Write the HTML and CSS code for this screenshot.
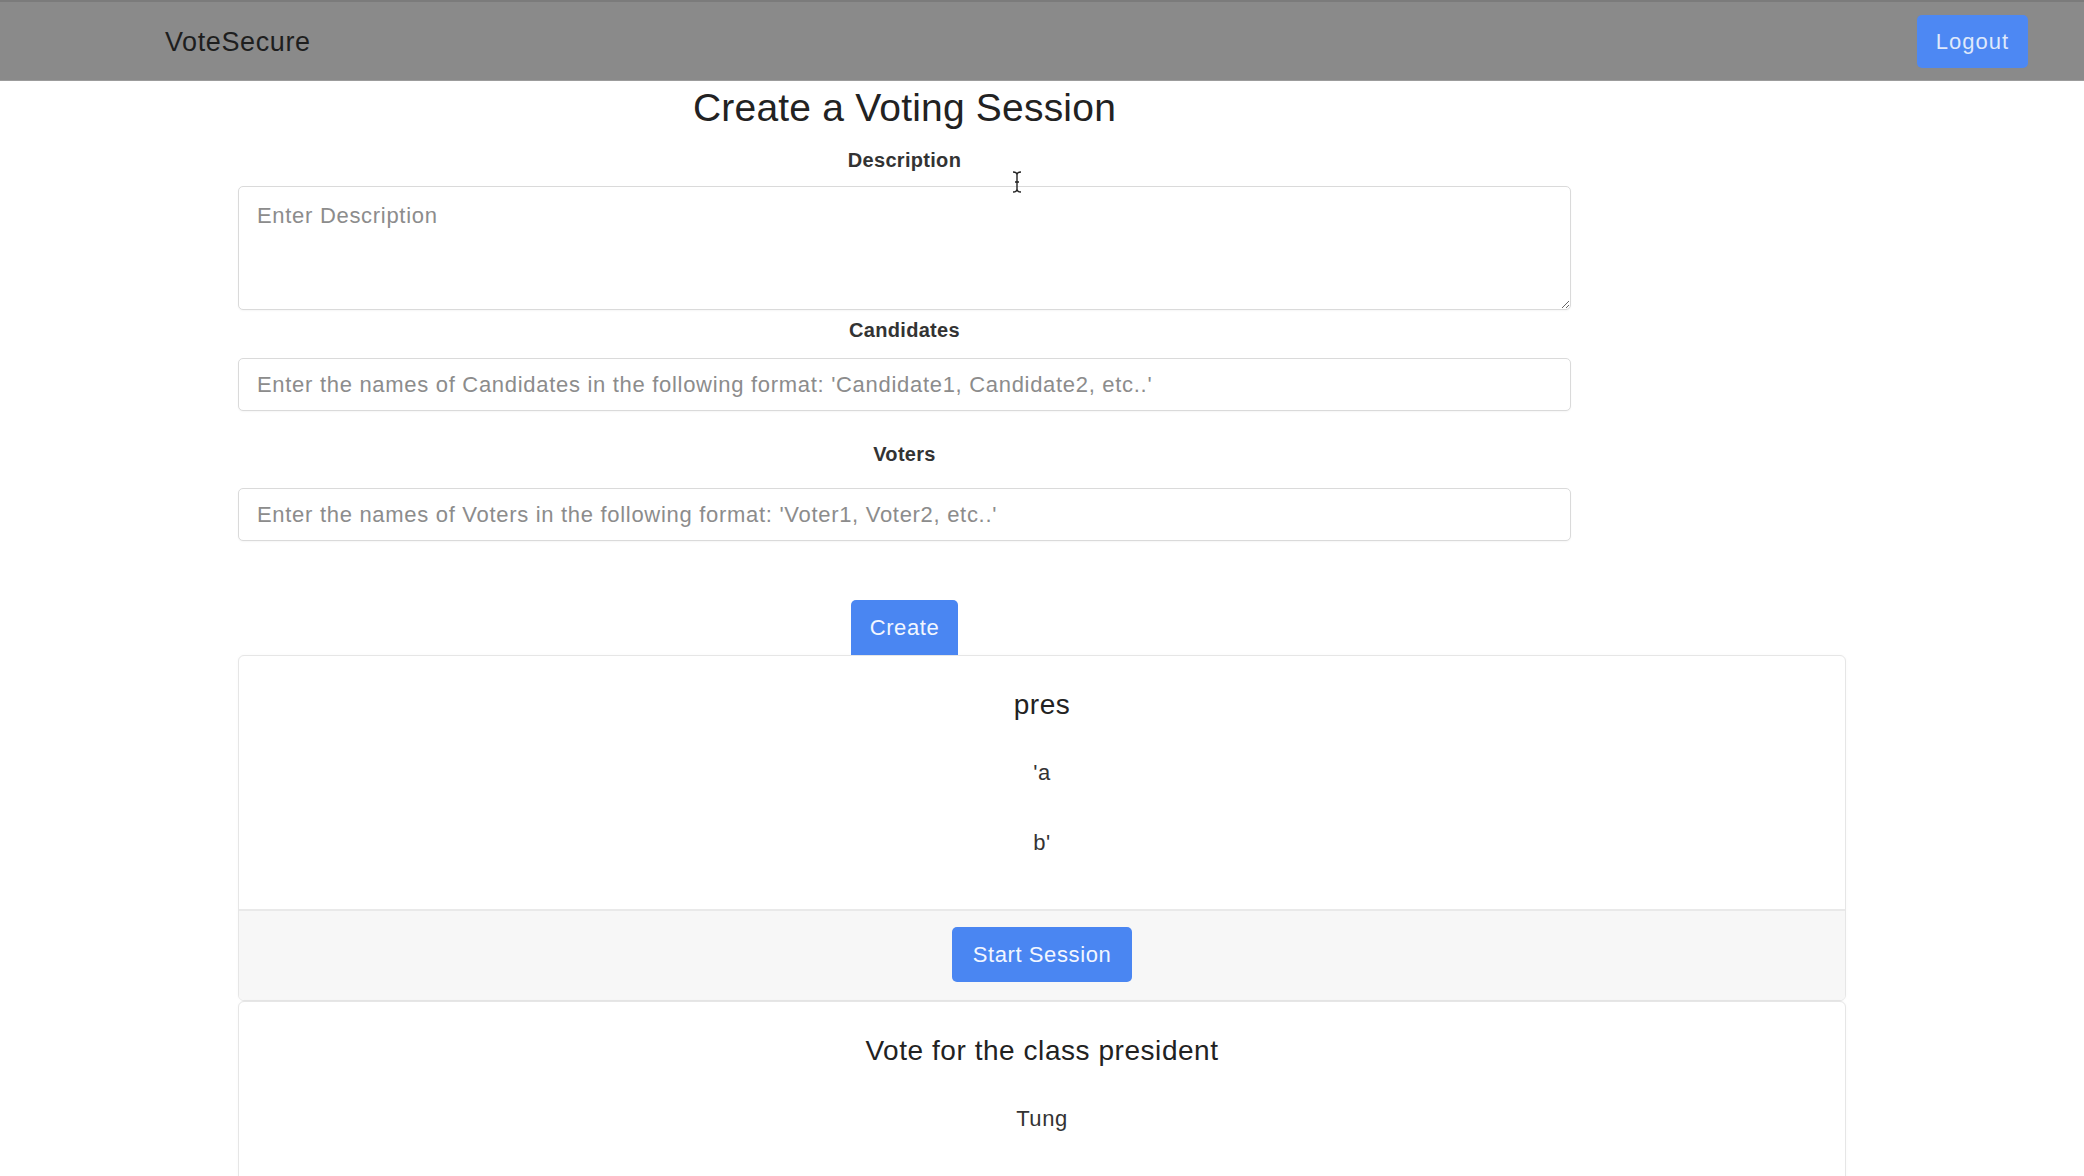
FILE: index.html
```html
<!DOCTYPE html>
<html lang="en">
<head>
<meta charset="utf-8">
<title>VoteSecure</title>
<link rel="stylesheet" href="styles.css">
</head>
<body>
<nav class="navbar">
  <span class="brand">VoteSecure</span>
  <button class="btn btn-logout">Logout</button>
</nav>
<main class="container">
  <form class="create-form">
    <h3 class="form-title">Create a Voting Session</h3>
    <label class="form-label label-desc">Description</label>
    <textarea class="form-control textarea" placeholder="Enter Description"></textarea>
    <label class="form-label label-cand">Candidates</label>
    <input class="form-control" type="text" placeholder="Enter the names of Candidates in the following format: 'Candidate1, Candidate2, etc..'">
    <label class="form-label label-voters">Voters</label>
    <input class="form-control" type="text" placeholder="Enter the names of Voters in the following format: 'Voter1, Voter2, etc..'">
    <div class="create-row">
      <button type="button" class="btn btn-create">Create</button>
    </div>
  </form>

  <section class="card">
    <div class="card-body">
      <h5 class="card-title">pres</h5>
      <div class="candidates">
        <p class="candidate">'a</p>
        <p class="candidate">b'</p>
      </div>
    </div>
    <div class="card-footer">
      <button class="btn btn-start">Start Session</button>
    </div>
  </section>

  <section class="card">
    <div class="card-body">
      <h5 class="card-title">Vote for the class president</h5>
      <div class="candidates">
        <p class="candidate">Tung</p>
      </div>
    </div>
  </section>
</main>
<svg class="cursor" width="10" height="22" viewBox="0 0 10 22" aria-hidden="true">
  <path d="M1 1 Q5 1 5 4 Q5 1 9 1 M5 4 V18 M1 21 Q5 21 5 18 Q5 21 9 21 M3 11 H7" fill="none" stroke="#222" stroke-width="1.4"/>
</svg>
</body>
</html>
```

FILE: styles.css
```css
* { box-sizing: border-box; }

html, body {
  margin: 0;
  padding: 0;
  background: #ffffff;
  font-family: "Liberation Sans", Arial, Helvetica, sans-serif;
  color: #222;
}

.navbar {
  height: 81px;
  background: #8a8a8a;
  border-top: 2px solid #7b7b7b;
  border-bottom: 1px solid #9c9c9c;
  display: flex;
  align-items: center;
  justify-content: space-between;
  padding: 0 56px 0 165px;
}

.brand {
  font-size: 27px;
  color: #1e1e1e;
  letter-spacing: 0.6px;
  margin-top: 2px;
}

.btn {
  font-family: inherit;
  font-size: 22px;
  line-height: 33px;
  border: none;
  border-radius: 5px;
  background: #4a86f2;
  color: #f2f6ff;
  cursor: pointer;
  letter-spacing: 0.6px;
}

.btn-logout {
  background: #4d88f3;
  color: #dfe9fb;
  padding: 10px 19px;
  letter-spacing: 1px;
}

.container {
  width: 1608px;
  margin: 0 auto;
}

.create-form {
  width: 1333px;
  display: flex;
  flex-direction: column;
  align-items: center;
}

.form-title {
  margin: 3px 0 13px;
  font-size: 39px;
  line-height: 48px;
  font-weight: 500;
  color: #222;
  letter-spacing: 0.2px;
}

.form-label {
  font-size: 20px;
  line-height: 30px;
  font-weight: 700;
  color: #333;
  letter-spacing: 0.3px;
}

.label-desc { margin-bottom: 11px; }
.label-cand { margin-top: 5px; margin-bottom: 13px; }
.label-voters { margin-top: 28px; margin-bottom: 19px; }

.form-control {
  width: 100%;
  font-family: inherit;
  font-size: 22px;
  letter-spacing: 0.7px;
  color: #333;
  border: 1px solid #dadada;
  border-radius: 5px;
  background: #fff;
  padding: 9px 18px;
  height: 53px;
  box-shadow: 0 1px 2px rgba(0, 0, 0, 0.04);
  outline: none;
}

.form-control::placeholder {
  color: #8c8c8c;
}

.textarea {
  height: 124px;
  padding: 12px 18px;
  resize: vertical;
  line-height: 1.5;
}

.create-row {
  margin-top: 59px;
  display: flex;
  justify-content: center;
}

.btn-create {
  padding: 11px 19px;
  border-radius: 5px 5px 0 0;
}

.card {
  border: 1px solid #e6e6e6;
  border-radius: 6px;
  background: #fff;
  box-shadow: 0 0 3px rgba(0, 0, 0, 0.03);
  overflow: hidden;
}

.card-body {
  padding: 32px 28px 50px;
  text-align: center;
}

.card-title {
  margin: 0;
  font-size: 28px;
  line-height: 34px;
  font-weight: 500;
  color: #222;
  letter-spacing: 0.55px;
}

.candidates {
  margin-top: 34px;
  display: flex;
  flex-direction: column;
  gap: 37px;
}

.candidate {
  margin: 0;
  font-size: 22px;
  line-height: 33px;
  color: #333;
  letter-spacing: 0.6px;
}

.card-footer {
  background: #f7f7f7;
  border-top: 2px solid #e9e9e9;
  padding: 16px 28px 18px;
  display: flex;
  justify-content: center;
}

.btn-start {
  padding: 11px 21px;
  line-height: 33px;
}

.cursor {
  position: absolute;
  left: 1012px;
  top: 171px;
}
```
